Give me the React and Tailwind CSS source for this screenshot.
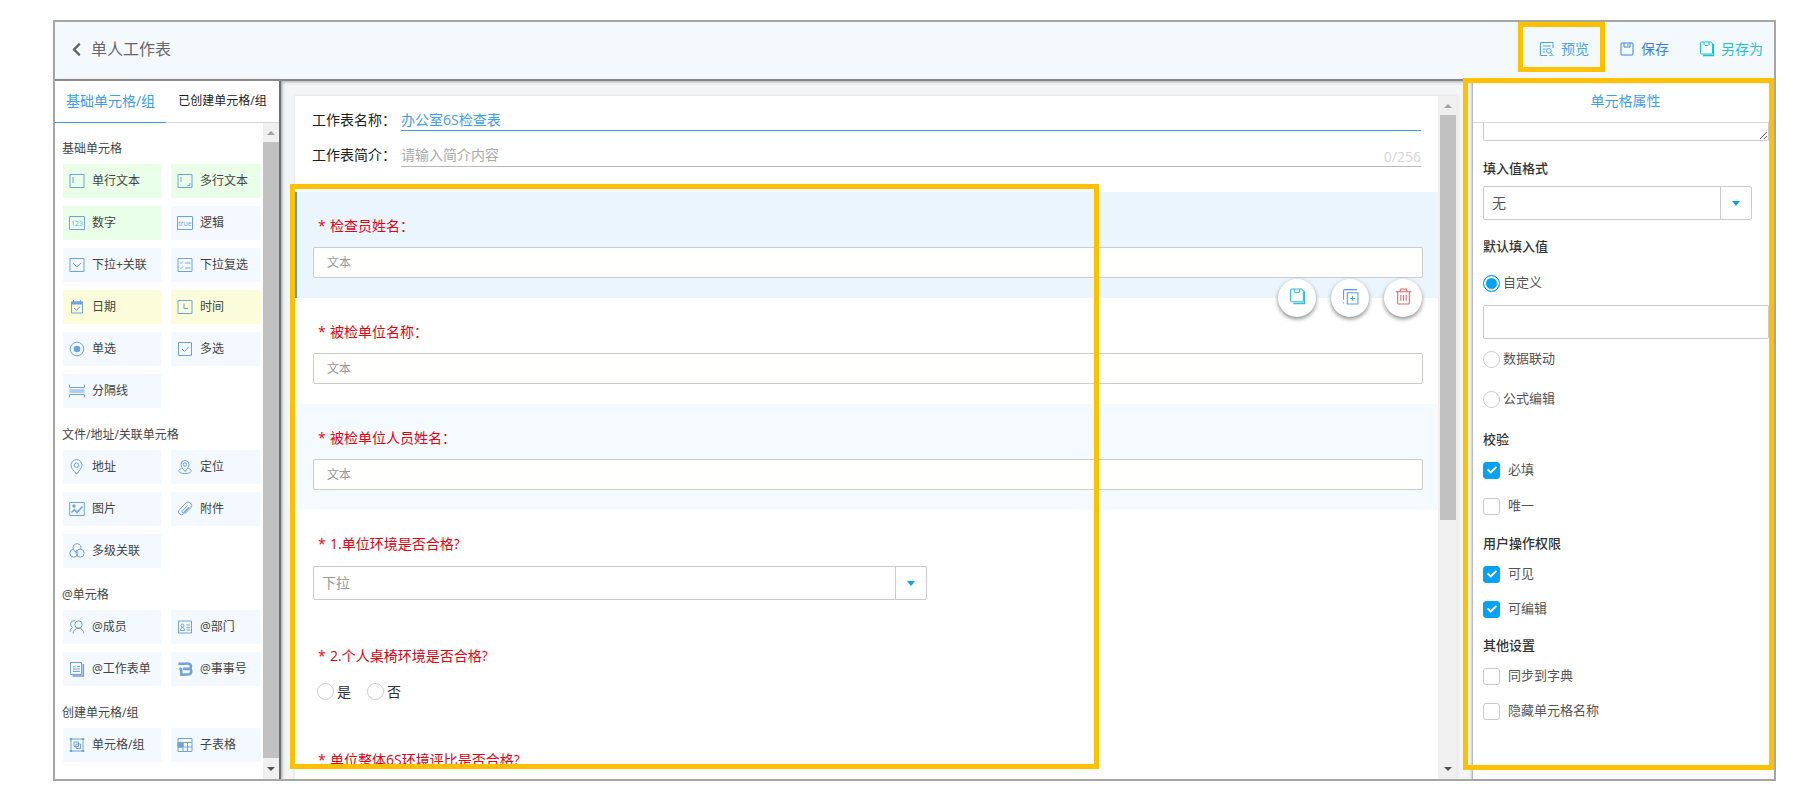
import { useState } from 'react';
import { FaCheck, FaChevronLeft } from 'react-icons/fa';

const ICONS = {
  text: <path d="M1 1.500h14v13H1zM4 4v6" />,
  textarea: <path d="M1 1.500h14v13H1zM4 4v5M13 10v2.500h-2.500" />,
  select: <path d="M1 1.500h14v13H1zM4 6l4 4 4-4" />,
  multiSelect: <path d="M1 1.500h14v13H1zM3 5.500l1 1 2-2M3 10.500l1 1 2-2M8 6h5.500M8 11h5.500" />,
  date: (
    <>
      <path d="M2.500 3h11v11h-11zM5 9l2.500 2.500L11 7.500" />
      <path d="M2.500 4h11" strokeWidth="3" />
      <path d="M4.500 1v2M11.500 1v2" />
    </>
  ),
  time: <path d="M1 1.500h14v13H1zM7 4.500v5h4" />,
  radio: (
    <>
      <circle cx="8" cy="8" r="6.800" />
      <circle cx="8" cy="8" r="3.300" fill="currentColor" stroke="none" />
    </>
  ),
  checkbox: <path d="M1.500 1.500h13v13h-13zM5 8l2.500 2.500L11.500 6" />,
  divider: <path d="M.5 1.500v3h15v-3M.5 7h15M.5 9h15M.5 14.500v-3h15v3" />,
  address: (
    <>
      <path d="M7.500 15C4.500 11.500 2 9 2 6.200a5.500 5.500 0 0 1 11 0C13 9 10.500 11.500 7.500 15z" />
      <circle cx="7.500" cy="6.200" r="2.200" />
    </>
  ),
  locate: (
    <>
      <path d="M8 12.500C5.500 9.500 4 7.800 4 5.500a4 4 0 0 1 8 0c0 2.300-1.500 4-4 7z" />
      <circle cx="8" cy="5.500" r="1.700" />
      <path d="M4.500 9.500C2.500 10 1.500 11 2 12.500c.6 1.400 3 2 6 2s5.400-.6 6-2c.5-1.500-.5-2.500-2.500-3" />
    </>
  ),
  image: (
    <>
      <path d="M.700 1.500h14.600v13H.700z" />
      <path d="M2.500 11.500l3-3 2.500 3 5.500-6" strokeWidth="1.500" />
      <circle cx="5" cy="5" r="1.200" fill="currentColor" />
    </>
  ),
  attach: (
    <path d="M12.500 6.500l-6 6.300a2.900 2.900 0 0 1-4.200-4l6.500-6.700a3.400 3.400 0 0 1 5 4.600l-6 6.200M10.500 4.500l-5.300 5.600a1 1 0 0 0 1.400 1.400l5.200-5.500" />
  ),
  relation: (
    <>
      <path d="M4.300 6.200A4 4 0 1 1 11.700 6.200M4.300 6.200A4 4 0 1 0 8.800 10.500M11.700 6.200A4 4 0 1 1 7.200 10.500" />
      <path d="M4.300 6.200C5 8 6.500 9 8 9M11.700 6.200C9 6 7 8 7.200 10.500M8.800 10.500C9 9 8 7.500 7 7" />
    </>
  ),
  member: (
    <>
      <circle cx="9.500" cy="5.500" r="3.700" />
      <path d="M6 1.800a3.500 3.500 0 0 0-2.500 6.500C2 9.500 1 11 1 13M4 14.500c.3-3 2.300-5.300 5.500-5.300s5.200 2.300 5.500 5.300" />
    </>
  ),
  department: (
    <>
      <path d="M1.500 2h13v12h-13zM3.500 11.500c0-2 .7-3 2-3s2 1 2 3zM9.500 6H13M9.500 8.500H13M9.500 11H13" />
      <circle cx="5.500" cy="6.500" r="1.500" />
    </>
  ),
  sheet: (
    <>
      <path d="M1.500 1.500h11v12h-11zM4 5.500l1 .7L6.500 5M8 5.500h3M4 8h7M4 10.500h7" />
      <path d="M14.300 3v12H3.500" strokeWidth="1.600" />
    </>
  ),
  matter: (
    <path
      d="M1.500 2.500c4 1 7.500-.500 10.500.2 2.500.7 2.500 3.800.8 5 2.200 1.200 1.800 5.300-1 5.600-2.800.2-4 .2-7.300.5L4 8.200 2.500 7.500M6 7.800c2 .2 4.500 0 6.500 0"
      strokeWidth="2.600"
    />
  ),
  group: (
    <>
      <path d="M2 2h12v12H2zM5 5h4.500v4.500H5zM7 7h4.500v4.500H7z" />
      <path d="M.8 2h2.400M12.800 2h2.400M.8 14h2.400M12.800 14h2.400" strokeWidth="2" />
    </>
  ),
  subTable: (
    <>
      <path d="M1 1.500h14v13H1zM1 5.500h14M6 5.500v9M10.500 5.500v9M1 10h14" />
      <path d="M1 5.500h5V10H1z" fill="currentColor" />
    </>
  ),
  preview: (
    <>
      <path d="M14 7V1.500H1.500v13H8M4 5h7.500M4 8h2.500M4 11h2" />
      <circle cx="9.800" cy="9.800" r="2.300" />
      <path d="M11.500 11.500L14.500 15M10.500 14.500h2" />
    </>
  ),
  save: <path d="M3 2h10a1 1 0 0 1 1 1v10a1 1 0 0 1-1 1H3a1 1 0 0 1-1-1V3a1 1 0 0 1 1-1zM5 2v4h6V2M8 4h1.500" />,
  saveAs: (
    <>
      <path d="M2.500 1h9.500l1.500 1.500V12a1 1 0 0 1-1 1h-10a1 1 0 0 1-1-1V2a1 1 0 0 1 1-1zM5 1v2.500l1 1h3l1-1V1" />
      <path d="M14.500 3v11.500H4" strokeWidth="1.400" />
    </>
  ),
  copy: <path d="M1.500 13.500v1M1.500 11V2.500a1 1 0 0 1 1-1H14M5 4.500h10v10.500H5zM10 7.500v4.500M7.700 9.800h4.600" />,
  trash: <path d="M.5 3.500h15M4.500 3.500L5.500 1h5l1 2.500M2.500 3.500V14a1 1 0 0 0 1 1h9a1 1 0 0 0 1-1V3.500M5.500 6.500v5.500M8 6.500v5.500M10.500 6.500v5.500" />,
};

const ICON_TEXT = { number: '123', logic: 'true' };

const GROUPS = [
  {
    title: '基础单元格',
    items: [
      { icon: 'text', label: '单行文本', tone: 'green' },
      { icon: 'textarea', label: '多行文本', tone: 'green' },
      { icon: 'number', label: '数字', tone: 'green' },
      { icon: 'logic', label: '逻辑' },
      { icon: 'select', label: '下拉+关联' },
      { icon: 'multiSelect', label: '下拉复选' },
      { icon: 'date', label: '日期', tone: 'yellow' },
      { icon: 'time', label: '时间', tone: 'yellow' },
      { icon: 'radio', label: '单选' },
      { icon: 'checkbox', label: '多选' },
      { icon: 'divider', label: '分隔线' },
    ],
  },
  {
    title: '文件/地址/关联单元格',
    items: [
      { icon: 'address', label: '地址' },
      { icon: 'locate', label: '定位' },
      { icon: 'image', label: '图片' },
      { icon: 'attach', label: '附件' },
      { icon: 'relation', label: '多级关联' },
    ],
  },
  {
    title: '@单元格',
    items: [
      { icon: 'member', label: '@成员' },
      { icon: 'department', label: '@部门' },
      { icon: 'sheet', label: '@工作表单' },
      { icon: 'matter', label: '@事事号' },
    ],
  },
  {
    title: '创建单元格/组',
    items: [
      { icon: 'group', label: '单元格/组' },
      { icon: 'subTable', label: '子表格' },
    ],
  },
];

const TONES = {
  green: 'bg-[#e9ffe7]',
  yellow: 'bg-[#fbfcd9]',
  blue: 'bg-[#f3f9fe]',
};

function Icon({ name, className = 'size-4' }) {
  if (ICON_TEXT[name]) {
    return (
      <svg viewBox="0 0 16 16" className={className} fill="none" stroke="currentColor">
        <path d="M.5 1.500h15v13H.5z" />
        <text x="8" y="10.500" textAnchor="middle" fontSize="7" fill="currentColor" stroke="none">
          {ICON_TEXT[name]}
        </text>
      </svg>
    );
  }
  return (
    <svg viewBox="0 0 16 16" className={className} fill="none" stroke="currentColor">
      {ICONS[name]}
    </svg>
  );
}

function ScrollBar({ thumb, className = 'w-4' }) {
  return (
    <div className={`flex shrink-0 flex-col items-center bg-[#f0f0f0] ${className}`}>
      <div className="flex h-[19px] shrink-0 items-center">
        <span className="border-x-4 border-b-4 border-x-transparent border-b-[#a0a0a0]" />
      </div>
      <div className="flex w-4 grow flex-col">
        <div className={`w-full bg-[#c1c1c1] ${thumb}`} />
      </div>
      <div className="flex h-[21px] shrink-0 items-center">
        <span className="border-x-4 border-t-4 border-x-transparent border-t-[#505050]" />
      </div>
    </div>
  );
}

function Sidebar() {
  return (
    <aside className="z-10 flex w-[226px] shrink-0 flex-col border-r-2 border-[#6b6d70] bg-white shadow-[1px_0_3px_#999]">
      <div className="flex h-[42px] shrink-0">
        <button className="w-[111px] border-b border-[#3d9df2] pb-[2px] text-sm whitespace-nowrap text-[#3d9df2]">
          基础单元格/组
        </button>
        <button className="flex-1 border-b border-[#d8d8d8] pb-[2px] text-xs whitespace-nowrap text-[#222]">
          已创建单元格/组
        </button>
      </div>
      <div className="flex min-h-0 flex-1">
        <div className="mr-[2px] min-w-0 flex-1 overflow-hidden pl-2">
          {GROUPS.map((group) => (
            <section key={group.title} className="mt-[17px] first:mt-4">
              <h3 className="-ml-px mb-[5px] h-5 text-xs leading-5 text-[#444]">{group.title}</h3>
              <div className="grid grid-cols-[98px_98px] gap-x-[10px] gap-y-2">
                {group.items.map((item) => (
                  <button
                    key={item.label}
                    className={`flex h-[34px] items-center gap-[7px] pl-[6px] text-xs whitespace-nowrap text-[#444] ${TONES[item.tone || 'blue']}`}
                  >
                    <Icon name={item.icon} className="size-4 shrink-0 text-[#6ea3dc]" />
                    {item.label}
                  </button>
                ))}
              </div>
            </section>
          ))}
        </div>
        <ScrollBar thumb="h-full" />
      </div>
    </aside>
  );
}

function SelectBox({ id, value, className }) {
  return (
    <div className={`grid h-[34px] rounded-[2px] border border-[#ccc] bg-white ${className}`}>
      <select id={id} className="w-full appearance-none pl-2 text-sm outline-none [grid-area:1/1]">
        <option>{value}</option>
      </select>
      <span className="pointer-events-none flex w-[31px] items-center justify-center justify-self-end border-l border-[#ccc] [grid-area:1/1]">
        <span className="border-x-4 border-t-[5px] border-x-transparent border-t-[#0aa0f0]" />
      </span>
    </div>
  );
}

function Radio({ label, name, checked, onChange, className }) {
  return (
    <label className={`flex items-center gap-[3px] ${className}`}>
      <input
        type="radio"
        name={name}
        checked={checked}
        onChange={onChange}
        className="size-[17px] appearance-none rounded-full border border-[#ccc] bg-white checked:border-[#03a2f5] checked:bg-[#03a2f5] checked:shadow-[inset_0_0_0_2px_#fff]"
      />
      {label}
    </label>
  );
}

function Check({ label, defaultChecked, className }) {
  return (
    <label className={`flex h-5 items-center gap-2 text-[13px] text-[#555] ${className}`}>
      <span className="grid place-items-center">
        <input
          type="checkbox"
          defaultChecked={defaultChecked}
          className="peer size-[17px] appearance-none rounded-[3px] border border-[#ccc] bg-white [grid-area:1/1] checked:border-[#03a2f5] checked:bg-[#03a2f5]"
        />
        <FaCheck className="pointer-events-none hidden size-[10px] text-white [grid-area:1/1] peer-checked:block" />
      </span>
      {label}
    </label>
  );
}

function Field({ title, htmlFor, className = '', children }) {
  return (
    <section className={`relative pt-6 pr-[15px] pl-[18px] ${className}`}>
      <label htmlFor={htmlFor} className="flex h-5 items-center gap-[5px] pl-[5px] text-sm text-[#e60012]">
        <span className="w-[7px]">*</span>
        {title}
      </label>
      {children}
    </section>
  );
}

function TextInput({ id }) {
  return (
    <input
      id={id}
      placeholder="文本"
      className="mt-[11px] block h-[31px] w-full rounded-[2px] border border-[#ccc] bg-[#fffffd] pl-[13px] text-xs outline-none placeholder:text-[#999]"
    />
  );
}

function ActionButton({ icon, label, className }) {
  return (
    <button
      aria-label={label}
      className={`flex size-[38px] items-center justify-center rounded-full bg-white pb-1 shadow-[0_2px_4px_#888] ${className}`}
    >
      <Icon name={icon} className="size-[17px]" />
    </button>
  );
}

function Editor() {
  const [answer, setAnswer] = useState('');

  return (
    <main className="flex min-w-0 flex-1 bg-[#f4f5f7] pt-[15px] pr-[15px] pl-[14px]">
      <div className="relative flex min-w-0 flex-1 shadow-[0_0_3px_#ddd]">
        <div className="min-w-0 flex-1 overflow-hidden bg-white">
          <div className="flex h-24 flex-col pt-[13px] pr-[17px] pl-[17px] text-sm text-[#222]">
            <div className="flex h-[22px]">
              <label htmlFor="sheet-name" className="w-[89px] leading-[22px]">工作表名称：</label>
              <input
                id="sheet-name"
                defaultValue="办公室6S检查表"
                className="min-w-0 flex-1 border-b border-[#3d9df2] text-[#3d9df2] outline-none"
              />
            </div>
            <div className="mt-3 flex h-6">
              <label htmlFor="sheet-intro" className="w-[89px] leading-6">工作表简介：</label>
              <div className="flex min-w-0 flex-1 border-b border-[#bbb]">
                <input
                  id="sheet-intro"
                  placeholder="请输入简介内容"
                  className="min-w-0 flex-1 outline-none placeholder:text-[#aaa]"
                />
                <span className="self-end leading-[18px] text-[#d5d5d5]">0/256</span>
              </div>
            </div>
          </div>

          <Field
            title="检查员姓名："
            htmlFor="inspector"
            className="z-10 bg-[#eaf5fe] pb-5 shadow-[inset_2px_0_0_#5b9bd5]"
          >
            <TextInput id="inspector" />
            <div className="absolute right-4 -bottom-[19px] flex gap-[15px]">
              <ActionButton icon="saveAs" label="另存为" className="text-[#2fc0d8]" />
              <ActionButton icon="copy" label="复制" className="text-[#4a9ff5]" />
              <ActionButton icon="trash" label="删除" className="text-[#e8606a]" />
            </div>
          </Field>
          <Field title="被检单位名称：" htmlFor="unit" className="pb-5">
            <TextInput id="unit" />
          </Field>
          <Field title="被检单位人员姓名：" htmlFor="person" className="bg-[#f5faff] pb-5">
            <TextInput id="person" />
          </Field>
          <Field title="1.单位环境是否合格?" htmlFor="env" className="pb-[22px]">
            <SelectBox id="env" value="下拉" className="mt-3 w-[55.3%] text-[#999]" />
          </Field>
          <Field title="2.个人桌椅环境是否合格?" className="pb-[26px]">
            <div className="mt-[17px] flex h-[17px] gap-4 pl-1 text-sm text-[#333]">
              {['是', '否'].map((option) => (
                <Radio
                  key={option}
                  name="desk"
                  label={option}
                  checked={answer === option}
                  onChange={() => setAnswer(option)}
                />
              ))}
            </div>
          </Field>
          <Field title="单位整体6S环境评比是否合格?" />
        </div>
        <ScrollBar thumb="h-[63%]" className="w-[19px]" />
        <div className="pointer-events-none absolute top-[88px] bottom-[10px] -left-[5px] z-20 w-[809px] border-[5px] border-[#ffc000]" />
      </div>
    </main>
  );
}

function Properties() {
  const [source, setSource] = useState('自定义');

  return (
    <aside className="relative flex w-[302px] shrink-0 flex-col border-l border-[#bbb] bg-white shadow-[-1px_0_2px_#ccc]">
      <h2 className="h-[42px] shrink-0 border-b border-[#d8d8d8] pl-1 text-center text-sm leading-10 text-[#3d9df2]">
        单元格属性
      </h2>
      <div className="min-h-0 flex-1 overflow-hidden pr-[5px] pl-[10px] text-[13px] text-[#555]">
        <textarea
          aria-label="说明"
          className="block h-[18px] w-full resize-y rounded-b-[2px] border border-t-0 border-[#ccc] outline-none"
        />
        <label htmlFor="format" className="mt-[17px] block h-5 leading-5 font-medium text-[#333]">填入值格式</label>
        <SelectBox id="format" value="无" className="mt-2 mr-[17px]" />

        <h3 className="mt-4 h-5 leading-5 font-medium text-[#333]">默认填入值</h3>
        <Radio
          name="source"
          label="自定义"
          checked={source === '自定义'}
          onChange={() => setSource('自定义')}
          className="mt-[17px] h-5"
        />
        <input aria-label="默认值" className="mt-3 block h-[34px] w-full rounded-[2px] border border-[#ccc] px-2 outline-none" />
        <Radio
          name="source"
          label="数据联动"
          checked={source === '数据联动'}
          onChange={() => setSource('数据联动')}
          className="mt-[10px] h-5"
        />
        <Radio
          name="source"
          label="公式编辑"
          checked={source === '公式编辑'}
          onChange={() => setSource('公式编辑')}
          className="mt-5 h-5"
        />

        <h3 className="mt-5 h-5 leading-5 font-medium text-[#333]">校验</h3>
        <Check label="必填" defaultChecked className="mt-[11px]" />
        <Check label="唯一" className="mt-4" />

        <h3 className="mt-[17px] h-5 leading-5 font-medium text-[#333]">用户操作权限</h3>
        <Check label="可见" defaultChecked className="mt-[11px]" />
        <Check label="可编辑" defaultChecked className="mt-[15px]" />

        <h3 className="mt-4 h-5 leading-5 font-medium text-[#333]">其他设置</h3>
        <Check label="同步到字典" className="mt-[11px]" />
        <Check label="隐藏单元格名称" className="mt-[15px]" />
      </div>
      <div className="pointer-events-none absolute -top-[3px] right-0 bottom-[9px] -left-[10px] z-20 border-[5px] border-[#ffc000]" />
    </aside>
  );
}

export default function App() {
  return (
    <div className="h-screen bg-white pt-5 pr-10 pb-3 pl-[53px] font-['Open_Sans','Noto_Sans_CJK_SC',sans-serif]">
      <div className="flex h-full flex-col overflow-hidden border-2 border-[#a6a6a6]">
        <header className="z-10 flex h-[59px] shrink-0 items-center justify-between border-b-2 border-[#858585] bg-[#f4f9fe] pr-[11px] pb-[3px] pl-[14px] shadow-[0_1px_3px_#aaa]">
          <a href="#back" className="flex items-center gap-[7px] text-base text-[#666]">
            <FaChevronLeft className="size-[15px]" />
            单人工作表
          </a>
          <nav className="flex h-full items-center text-sm">
            <button className="mb-1 flex h-[50px] w-[87px] items-center justify-end gap-[6px] border-[5px] border-[#ffc000] pt-1 pr-[11px] text-[#4a9ff5]">
              <Icon name="preview" />
              预览
            </button>
            <button className="ml-[14px] flex items-center gap-[6px] text-[#3a80d8]">
              <Icon name="save" />
              保存
            </button>
            <button className="ml-[30px] flex items-center gap-[6px] text-[#1fc0d6]">
              <Icon name="saveAs" />
              另存为
            </button>
          </nav>
        </header>
        <div className="flex min-h-0 flex-1">
          <Sidebar />
          <Editor />
          <Properties />
        </div>
      </div>
    </div>
  );
}
